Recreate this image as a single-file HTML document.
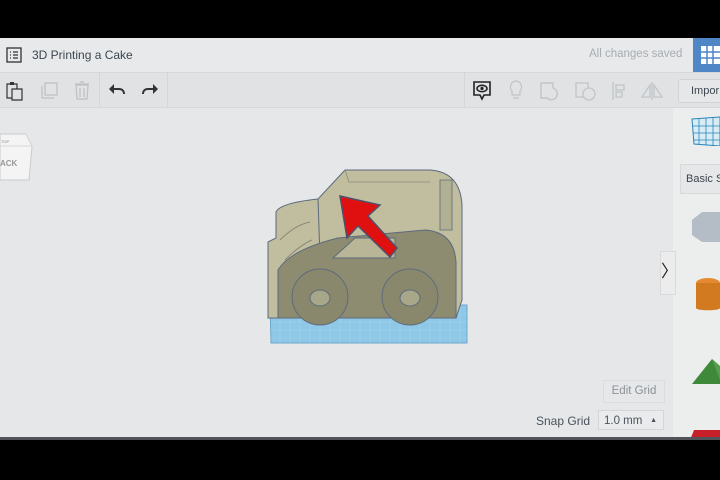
<!DOCTYPE html>
<html><head><style>
body{margin:0;width:720px;height:480px;background:#000;overflow:hidden;font-family:"Liberation Sans",sans-serif;position:relative}
.app{position:absolute;left:0;top:38px;width:720px;height:402px;background:#e6e7e8}
.hdr{position:absolute;left:0;top:0;width:720px;height:34px;background:#e8e9ea;border-bottom:1px solid #d6d8da}
.tb{position:absolute;left:0;top:35px;width:720px;height:34px;background:#e1e2e3;border-bottom:1px solid #d6d8da}
.t{position:absolute;font-size:12px;color:#3c4650}
.rp{position:absolute;left:673px;top:70px;width:47px;height:332px;background:#eceded}
</style></head><body>
<div class="app">
<div class="hdr">
<svg style="position:absolute;left:6px;top:9px" width="16" height="16"><rect x="1" y="1" width="14" height="14" fill="none" stroke="#333" stroke-width="1.3"/><path d="M4 5h1M7 5h5M4 8h1M7 8h5M4 11h1M7 11h5" stroke="#333" stroke-width="1.3"/></svg>
<div class="t" style="left:32px;top:10px;font-size:12px">3D Printing a Cake</div>
<div class="t" style="left:589px;top:10px;color:#a7adb3;font-size:11.5px">All changes saved</div>
<div style="position:absolute;left:693px;top:0;width:27px;height:34px;background:#4f86c6"></div>
<svg style="position:absolute;left:701px;top:8px" width="19" height="18"><path d="M0 0h19v18H0z" fill="#fff"/><path d="M6 0v18M12 0v18M0 6h19M0 12h19" stroke="#4f86c6" stroke-width="1.5"/></svg>
</div>
<div class="tb">
<svg style="position:absolute;left:5px;top:8px" width="18" height="20"><path d="M2 3h10v14H2z" fill="none" stroke="#333" stroke-width="1.2"/><path d="M7 8h10v11H7z" fill="#e1e2e3" stroke="#333" stroke-width="1.2"/><rect x="5" y="1" width="4" height="3" fill="#333"/></svg>
<svg style="position:absolute;left:39px;top:8px" width="20" height="20"><path d="M6 2h12v12H6z M3 5v12h12" fill="none" stroke="#bcc1c5" stroke-width="1.2"/></svg>
<svg style="position:absolute;left:74px;top:7px" width="16" height="20"><path d="M2 5h12l-1 14H3z M1 4h14 M6 2h4 M6 8v9 M10 8v9" fill="none" stroke="#bcc1c5" stroke-width="1.2"/></svg>
<div style="position:absolute;left:99px;top:0;width:1px;height:34px;background:#d4d6d8"></div>
<svg style="position:absolute;left:108px;top:10px" width="18" height="14"><path d="M2 6h9c3 0 5 2 5 5" fill="none" stroke="#333" stroke-width="2"/><path d="M1 6l5-5v10z" fill="#333"/></svg>
<svg style="position:absolute;left:141px;top:10px" width="18" height="14"><path d="M16 6H7c-3 0-5 2-5 5" fill="none" stroke="#333" stroke-width="2"/><path d="M17 6l-5-5v10z" fill="#333"/></svg>
<div style="position:absolute;left:167px;top:0;width:1px;height:34px;background:#d4d6d8"></div>
<div style="position:absolute;left:464px;top:0;width:1px;height:34px;background:#d4d6d8"></div>
<svg style="position:absolute;left:472px;top:7px" width="20" height="22"><path d="M2 2h16v13h-6l-2 4-2-4H2z" fill="none" stroke="#222" stroke-width="1.6"/><ellipse cx="10" cy="8.5" rx="5" ry="3.2" fill="none" stroke="#222" stroke-width="1.6"/><circle cx="10" cy="8.5" r="1.6" fill="#222"/></svg>
<svg style="position:absolute;left:508px;top:7px" width="16" height="22"><path d="M8 1a6 6 0 0 0-4 10v4h8v-4a6 6 0 0 0-4-10zM5 18h6" fill="none" stroke="#c0c5c9" stroke-width="1.2"/></svg>
<svg style="position:absolute;left:540px;top:8px" width="22" height="20"><path d="M1 2h12v5a6 6 0 1 1-6 10H1z" fill="none" stroke="#c0c5c9" stroke-width="1.4"/></svg>
<svg style="position:absolute;left:575px;top:8px" width="22" height="20"><path d="M1 2h12v14H1z" fill="none" stroke="#c0c5c9" stroke-width="1.3"/><circle cx="14" cy="13" r="6" fill="#e1e2e3" stroke="#c0c5c9" stroke-width="1.3"/></svg>
<svg style="position:absolute;left:611px;top:8px" width="18" height="20"><path d="M2 1v18M5 4h8v5H5zM5 11h6v5H5z" fill="none" stroke="#c0c5c9" stroke-width="1.3"/></svg>
<svg style="position:absolute;left:640px;top:8px" width="24" height="20"><path d="M12 1v18M10 4L2 16h8zM14 4l8 12h-8z" fill="none" stroke="#c0c5c9" stroke-width="1.3"/></svg>
<div style="position:absolute;left:678px;top:6px;width:50px;height:22px;border:1px solid #d0d3d6;border-radius:3px;background:#e6e7e8;font-size:11px;color:#3c4650;line-height:22px;padding-left:12px">Impor</div>
</div>
<svg style="position:absolute;left:0;top:88px" width="36" height="60"><path d="M0 8h26l6 12-3 34H0z" fill="#f4f4f4" stroke="#c8cacc"/><path d="M26 8l6 12H0" fill="none" stroke="#d8d9da"/><text x="1" y="17" font-size="4" fill="#888">TOP</text><text x="0" y="40" font-size="8" font-weight="bold" fill="#999" font-family="Liberation Sans">ACK</text></svg>
<svg style="position:absolute;left:260px;top:122px" width="220" height="190" viewBox="260 160 220 190">
<polygon points="270,305 467,305 467,343 271,343" fill="#8ec8e6" stroke="#6aa8cc"/>
<g stroke="#9fd3ec" stroke-width="0.6"><path d="M271,314H467M271,322H467M271,330H467M271,338H467"/><path d="M280,305v38M290,305v38M300,305v38M310,305v38M320,305v38M330,305v38M340,305v38M350,305v38M360,305v38M370,305v38M380,305v38M390,305v38M400,305v38M410,305v38M420,305v38M430,305v38M440,305v38M450,305v38M460,305v38"/></g>
<path d="M268,242 L276,238 L276,212 Q280,203 318,199 L345,170 L430,170 Q460,172 462,205 L462,300 L456,318 L268,318 Z" fill="#c0be9e" stroke="#5d6a7c" stroke-width="1"/>
<path d="M318,199 L320,258" stroke="#5d6a7c" fill="none"/>
<path d="M345,170 L349,182 L430,182" stroke="#8a8a78" fill="none" stroke-width="0.8"/>
<path d="M440,180 h12 v50 h-12z" fill="#b2b092" stroke="#5d6a7c" stroke-width="0.8"/>
<path d="M280,240 Q295,225 310,222 M285,260 Q300,245 312,240" stroke="#8a8a78" fill="none"/>
<path d="M278,318 L278,270 Q290,250 338,238 L425,230 Q454,232 456,262 L456,318 Z" fill="#8e8c70" stroke="#5d6a7c" stroke-width="1"/>
<path d="M333,258 L355,238 L395,238 L395,258 Z" fill="#b8b696" stroke="#5d6a7c"/>
<circle cx="320" cy="297" r="28" fill="#8a886c" stroke="#5d6a7c"/>
<circle cx="410" cy="297" r="28" fill="#8a886c" stroke="#5d6a7c"/>
<ellipse cx="320" cy="298" rx="10" ry="8" fill="#a9a78a" stroke="#5d6a7c"/>
<ellipse cx="410" cy="298" rx="10" ry="8" fill="#a9a78a" stroke="#5d6a7c"/>
<path d="M340,196 L380,205 L368,216 L397,248 L390,257 L358,226 L347,238 Z" fill="#e01010" stroke="#50506a" stroke-width="1.5"/>
</svg>
<div class="rp">
<svg style="position:absolute;left:17px;top:8px" width="30" height="30"><path d="M2 3l28-2v29L4 28z" fill="#d8ecf6" stroke="#2a86b8"/><path d="M9 2v27M16 2v27M23 1v28M2 10h28M3 17h27M3 24h27" stroke="#2a86b8" stroke-width="0.8"/></svg>
<div style="position:absolute;left:7px;top:56px;width:40px;height:28px;background:#e6e7e8;border:1px solid #d6d8da;border-right:none;font-size:11px;color:#3c4650;line-height:28px;padding-left:5px;white-space:nowrap;overflow:hidden">Basic S</div>
<svg style="position:absolute;left:17px;top:102px" width="30" height="40"><path d="M2 10l10-8h18v30H12L2 25z" fill="#b4bcc6"/></svg>
<svg style="position:absolute;left:21px;top:168px" width="26" height="40"><ellipse cx="14" cy="7" rx="12" ry="5" fill="#e48a30"/><path d="M2 7v25c0 3 24 3 24 0V7" fill="#d27a20"/></svg>
<svg style="position:absolute;left:17px;top:248px" width="30" height="32"><path d="M2 28L22 3 30 10v18z" fill="#3e8a3a"/><path d="M22 3l8 7v14z" fill="#55a050"/></svg>
<svg style="position:absolute;left:17px;top:320px" width="30" height="12"><path d="M4 2h26v10H0z" fill="#c8202a"/></svg>
</div>
<div style="position:absolute;left:660px;top:213px;width:14px;height:42px;background:#ececec;border:1px solid #d8dadc;font-size:17px;line-height:40px;text-align:center;color:#222">&#x232A;</div>
<div style="position:absolute;left:603px;top:342px;width:60px;height:21px;border:1px solid #dadcde;font-size:11.5px;color:#8a9198;line-height:21px;text-align:center">Edit Grid</div>
<div class="t" style="left:536px;top:376px;font-size:12px;color:#4a535c">Snap Grid</div>
<div style="position:absolute;left:598px;top:372px;width:66px;height:20px;border:1px solid #d4d6d8;background:#eaebec;font-size:11.5px;color:#4a535c;line-height:20px;padding-left:5px;box-sizing:border-box">1.0 mm<span style="position:absolute;right:6px;font-size:7px">▲</span></div>
<div style="position:absolute;left:0;top:399px;width:720px;height:3px;background:#505458"></div>
</div>
</body></html>
